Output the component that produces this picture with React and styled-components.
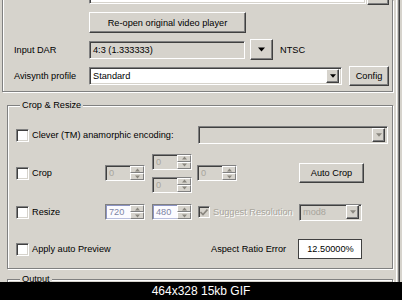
import React from "react"
import styled, { createGlobalStyle } from "styled-components"

const GlobalStyle = createGlobalStyle`
  html, body {
    margin: 0;
    padding: 0;
    background: #000;
  }
  body {
    font-family: "Liberation Sans", Arial, sans-serif;
  }
  * {
    box-sizing: border-box;
  }
`

const panel = "#d6d3cc"

const Shot = styled.div`
  width: 402px;
  height: 300px;
  display: flex;
  flex-direction: column;
  overflow: hidden;
`

const Screen = styled.div`
  height: 282px;
  flex-shrink: 0;
  display: flex;
  background: ${panel};
  overflow: hidden;
`

const Body = styled.div`
  width: 396px;
  display: flex;
  flex-direction: column;
  font-size: 9.2px;
  color: #000;
`

const WindowEdge = styled.div`
  width: 6px;
  background: linear-gradient(
    to right,
    #fff 0 1px,
    ${panel} 1px 2px,
    #808080 2px 3px,
    #404040 3px 4px,
    ${panel} 4px 6px
  );
`

const Caption = styled.div`
  height: 18px;
  flex-shrink: 0;
  background: #000;
  color: #fff;
  font-size: 12px;
  line-height: 18px;
  text-align: center;
  font-family: "Liberation Sans", Arial, sans-serif;
`

/* etched group frames */
const TopGroup = styled.div`
  margin-left: 2px;
  width: 391px;
  height: 92px;
  flex-shrink: 0;
  border: 1px solid #808080;
  border-top: none;
  box-shadow: inset 1px 0 0 #fff, 1px 1px 0 #fff;
  padding-left: 11px;
  display: flex;
  flex-direction: column;
`

const Group = styled.div`
  margin: ${p => p.$top}px 0 0 7px;
  width: 386px;
  height: ${p => p.$height}px;
  flex-shrink: 0;
  border: 1px solid #808080;
  box-shadow: inset 1px 1px 0 #fff, 1px 1px 0 #fff;
  padding-left: 8px;
  display: flex;
  flex-direction: column;
`

const Legend = styled.div`
  align-self: flex-start;
  margin: -6px 0 0 4px;
  padding: 0 2px;
  line-height: 11px;
  background: ${panel};
`

const Row = styled.div`
  display: flex;
  align-items: center;
  height: ${p => p.$h}px;
  margin-top: ${p => p.$top || 0}px;
  flex-shrink: 0;
`

const Label = styled.div`
  width: ${p => p.$w}px;
  flex-shrink: 0;
  color: ${p => (p.$disabled ? "#a8a59c" : "#000")};
  text-shadow: ${p => (p.$disabled ? "1px 1px 0 #fff" : "none")};
  white-space: nowrap;
`

const Sunken = styled.div`
  display: flex;
  align-items: center;
  flex-shrink: 0;
  width: ${p => p.$w}px;
  height: ${p => p.$h}px;
  margin-left: ${p => p.$ml || 0}px;
  margin-bottom: ${p => p.$mb || 0}px;
  background: ${p => p.$bg || "#fff"};
  color: ${p => p.$color || "#000"};
  border: 1px solid;
  border-color: #808080 #fff #fff #808080;
  box-shadow: inset 1px 1px 0 #404040, inset -1px -1px 0 ${panel};
  padding: 0 2px 0 3px;
  justify-content: ${p => p.$align || "flex-start"};
  white-space: nowrap;
`

const ValueBox = styled(Sunken)`
  border: 1px solid #404040;
  box-shadow: none;
`

const EditSpin = styled(Sunken)`
  ${p =>
    p.$active &&
    `box-shadow: inset 1px 1px 0 #8c94c4, inset -1px -1px 0 #b8bedc;`}
`

const Button = styled.div`
  display: flex;
  align-items: center;
  justify-content: center;
  flex-shrink: 0;
  width: ${p => p.$w}px;
  height: ${p => p.$h}px;
  margin-left: ${p => p.$ml || 0}px;
  margin-bottom: ${p => p.$mb || 0}px;
  border: 1px solid;
  border-color: #fff #404040 #404040 #fff;
  box-shadow: inset -1px -1px 0 #808080;
  background: ${panel};
  white-space: nowrap;
`

const ArrowBox = styled.div`
  margin-left: auto;
  width: 13px;
  height: 14px;
  flex-shrink: 0;
  display: flex;
  align-items: center;
  justify-content: center;
  border: 1px solid;
  border-color: #fff #404040 #404040 #fff;
  box-shadow: inset -1px -1px 0 #808080;
  background: ${panel};
`

const SpinText = styled.div`
  flex: 1;
  color: ${p => p.$color};
`

const SpinButtons = styled.div`
  display: flex;
  flex-direction: column;
  width: 14px;
  height: 14px;
  margin-right: -2px;
`

const SpinHalf = styled.div`
  flex: 1;
  display: flex;
  align-items: center;
  justify-content: center;
  border: 1px solid;
  border-color: #fff #808080 #808080 #fff;
  background: ${panel};
`

const Box = styled.div`
  width: ${p => p.$size}px;
  height: ${p => p.$size}px;
  flex-shrink: 0;
  margin-left: ${p => p.$ml || 0}px;
  margin-right: 3px;
  border: 1px solid;
  border-color: #808080 #fff #fff #808080;
  box-shadow: inset 1px 1px 0 #404040, inset -1px -1px 0 ${panel};
  background: ${p => (p.$disabled ? panel : "#fff")};
  display: flex;
  align-items: center;
  justify-content: center;
`

const CheckCell = styled.div`
  display: flex;
  align-items: center;
  width: ${p => p.$w}px;
  flex-shrink: 0;
`

const Stack = styled.div`
  display: flex;
  flex-direction: column;
  gap: 7px;
  margin-left: 7px;
`

const Arrow = ({ color = "#000", up = false, size = 7 }) => (
  <svg width={size} height={Math.ceil(size / 2) + 1} viewBox="0 0 7 4">
    <path d={up ? "M3.5 0 L7 4 L0 4 Z" : "M0 0 L7 0 L3.5 4 Z"} fill={color} />
  </svg>
)

const Combo = ({ w, h, text, ml, bg, disabled }) => (
  <Sunken $w={w} $h={h} $ml={ml} $bg={bg} $color={disabled ? "#a8a59c" : "#000"}>
    {text}
    <ArrowBox>
      <Arrow color={disabled ? "#8a877f" : "#000"} size={6} />
    </ArrowBox>
  </Sunken>
)

const Spinner = ({ value, ml, active }) => (
  <EditSpin $w={40} $h={16} $ml={ml} $bg={active ? "#fbfbff" : panel} $active={active}>
    <SpinText $color={active ? "#7d84a4" : "#a8a59c"}>{value}</SpinText>
    <SpinButtons>
      <SpinHalf>
        <Arrow up color="#8a877f" size={5} />
      </SpinHalf>
      <SpinHalf>
        <Arrow color="#8a877f" size={5} />
      </SpinHalf>
    </SpinButtons>
  </EditSpin>
)

const Check = ({ label, w, disabled, checked, ml }) => (
  <CheckCell $w={w}>
    <Box $size={disabled ? 12 : 13} $ml={ml} $disabled={disabled}>
      {checked && (
        <svg width="8" height="7" viewBox="0 0 8 7">
          <path d="M0.5 3 L3 5.5 L7.5 0.5" stroke="#8a877f" strokeWidth="1.6" fill="none" />
        </svg>
      )}
    </Box>
    <Label $disabled={disabled}>{label}</Label>
  </CheckCell>
)

const App = () => (
  <Shot>
    <GlobalStyle />
    <Screen>
      <Body>
        <TopGroup>
          <Row $h={5} style={{ alignItems: "flex-end" }}>
            <Label $w={75} />
            <Sunken $w={277} $h={18} $mb={1} />
            <Button $w={22} $h={20} $ml={1} />
          </Row>
          <Row $h={21} $top={7}>
            <Label $w={75} />
            <Button $w={157} $h={21}>Re-open original video player</Button>
          </Row>
          <Row $h={21} $top={6}>
            <Label $w={75}>Input DAR</Label>
            <Sunken $w={156} $h={18} $bg={panel}>4:3 (1.333333)</Sunken>
            <Button $w={23} $h={21} $ml={5}>
              <Arrow />
            </Button>
            <Label style={{ marginLeft: 7 }}>NTSC</Label>
          </Row>
          <Row $h={20} $top={6}>
            <Label $w={75}>Avisynth profile</Label>
            <Combo w={253} h={18} text="Standard" />
            <Button $w={40} $h={20} $ml={7}>Config</Button>
          </Row>
        </TopGroup>

        <Group $top={13} $height={164}>
          <Legend>Crop &amp; Resize</Legend>
          <Row $h={18} $top={15}>
            <Check w={182} label="Clever (TM) anamorphic encoding:" />
            <Combo w={190} h={18} bg={panel} disabled />
          </Row>
          <Row $h={40} $top={9}>
            <Check w={89} label="Crop" />
            <Spinner value="0" />
            <Stack>
              <Spinner value="0" />
              <Spinner value="0" />
            </Stack>
            <Spinner value="0" ml={5} />
            <Button $w={65} $h={20} $ml={62}>Auto Crop</Button>
          </Row>
          <Row $h={18} $top={10}>
            <Check w={89} label="Resize" />
            <Spinner value="720" active />
            <Spinner value="480" ml={7} active />
            <Check w={107} ml={6} label="Suggest Resolution" disabled checked />
            <Combo w={63} h={17} text="mod8" bg={panel} disabled />
          </Row>
          <Row $h={20} $top={18}>
            <Check w={195} label="Apply auto Preview" />
            <Label $w={87}>Aspect Ratio Error</Label>
            <ValueBox $w={64} $h={20} $align="center">
              12.50000%
            </ValueBox>
          </Row>
        </Group>

        <Group $top={10} $height={40}>
          <Legend>Output</Legend>
        </Group>
      </Body>
      <WindowEdge />
    </Screen>
    <Caption>464x328 15kb GIF</Caption>
  </Shot>
)

export default App
